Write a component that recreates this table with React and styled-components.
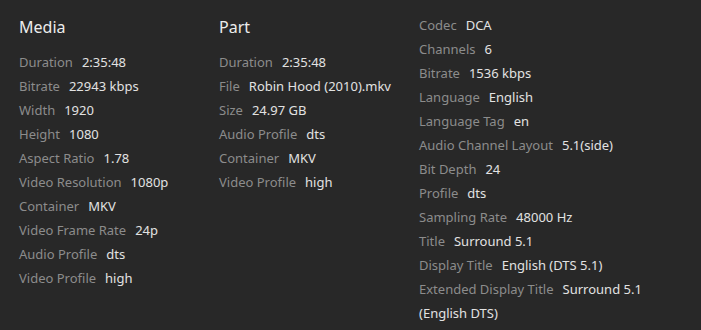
import React from "react";
import styled, { createGlobalStyle } from "styled-components";

const Global = createGlobalStyle`
  html, body { margin: 0; padding: 0; background: #282828; }
  body { font-family: "Noto Sans", "Open Sans", sans-serif; }
`;

const Page = styled.div`
  display: grid;
  grid-template-columns: 200px 200px 1fr;
  padding: 13px 19px 0 19px;
  min-height: 330px;
  box-sizing: border-box;
  background: #282828;
`;

const Column = styled.section`
  display: flex;
  flex-direction: column;
`;

const Header = styled.h2`
  margin: 1px 0 10px 0;
  font-size: 16px;
  font-weight: 400;
  line-height: 26px;
  color: #ececec;
`;

const Row = styled.div`
  font-size: 13px;
  line-height: 24px;
`;

const Label = styled.span`
  color: #8c8c8c;
`;

const Value = styled.span`
  color: #e2e2e2;
  margin-left: 9px;
`;

const media = [
  ["Duration", "2:35:48"],
  ["Bitrate", "22943 kbps"],
  ["Width", "1920"],
  ["Height", "1080"],
  ["Aspect Ratio", "1.78"],
  ["Video Resolution", "1080p"],
  ["Container", "MKV"],
  ["Video Frame Rate", "24p"],
  ["Audio Profile", "dts"],
  ["Video Profile", "high"],
];

const part = [
  ["Duration", "2:35:48"],
  ["File", "Robin Hood (2010).mkv"],
  ["Size", "24.97 GB"],
  ["Audio Profile", "dts"],
  ["Container", "MKV"],
  ["Video Profile", "high"],
];

const stream = [
  ["Codec", "DCA"],
  ["Channels", "6"],
  ["Bitrate", "1536 kbps"],
  ["Language", "English"],
  ["Language Tag", "en"],
  ["Audio Channel Layout", "5.1(side)"],
  ["Bit Depth", "24"],
  ["Profile", "dts"],
  ["Sampling Rate", "48000 Hz"],
  ["Title", "Surround 5.1"],
  ["Display Title", "English (DTS 5.1)"],
  ["Extended Display Title", "Surround 5.1 (English DTS)"],
];

const Rows = ({ items }) =>
  items.map(([k, v]) => (
    <Row key={k}>
      <Label>{k}</Label>
      <Value>{v}</Value>
    </Row>
  ));

export default function App() {
  return (
    <>
      <Global />
      <Page>
        <Column>
          <Header>Media</Header>
          <Rows items={media} />
        </Column>
        <Column>
          <Header>Part</Header>
          <Rows items={part} />
        </Column>
        <Column>
          <Rows items={stream} />
        </Column>
      </Page>
    </>
  );
}
